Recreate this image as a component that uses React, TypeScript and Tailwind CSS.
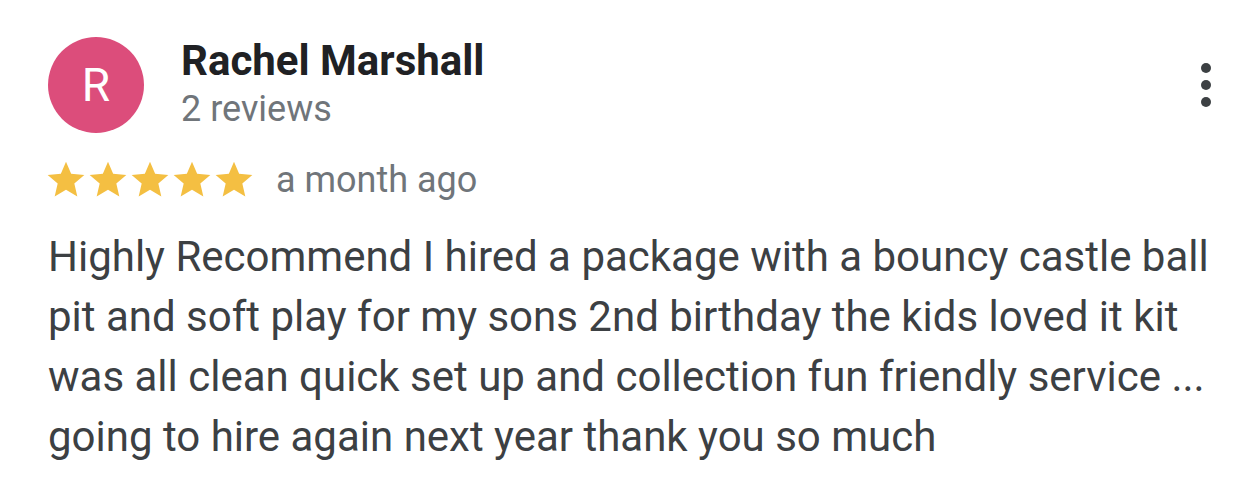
export default function App() {
  return (
    <div className="w-[1252px] h-[502px] bg-white font-['Roboto',sans-serif] overflow-hidden">
      <div className="pl-[48px] pr-[30px] pt-[37px]">
        {/* header */}
        <div className="flex items-start">
          <div className="w-[96px] h-[96px] rounded-full bg-[#dc4d7b] flex items-center justify-center shrink-0">
            <span className="text-white text-[46px] leading-none">R</span>
          </div>
          <div className="ml-[37px] flex-1">
            <div className="text-[42px] font-bold text-[#202124] leading-[48px]">Rachel Marshall</div>
            <div className="text-[36px] text-[#70757a] leading-[42px] mt-[3px]">2 reviews</div>
          </div>
          <div className="flex flex-col items-center gap-[7px] mt-[26px] mr-[11px]">
            <span className="w-[10px] h-[10px] rounded-full bg-[#3c4043]" />
            <span className="w-[10px] h-[10px] rounded-full bg-[#3c4043]" />
            <span className="w-[10px] h-[10px] rounded-full bg-[#3c4043]" />
          </div>
        </div>

        {/* rating */}
        <div className="flex items-center mt-[25px]">
          <div className="flex -ml-[3px]">
            {[0, 1, 2, 3, 4].map((i) => (
              <svg key={i} viewBox="0 0 24 24" className="w-[44px] h-[44px] -mx-[1px]" fill="#f4bf42">
                <path d="M12 17.27L18.18 21l-1.64-7.03L22 9.24l-7.19-.61L12 2 9.19 8.63 2 9.24l5.46 4.73L5.82 21z" />
              </svg>
            ))}
          </div>
          <span className="ml-[21px] text-[36px] text-[#70757a] leading-none">a month ago</span>
        </div>

        {/* body */}
        <p className="mt-[25px] text-[42px] leading-[60px] text-[#3c4043]">
          Highly Recommend I hired a package with a bouncy castle ball pit and soft play for my sons 2nd birthday the kids loved it kit was all clean quick set up and collection fun friendly service ... going to hire again next year thank you so much
        </p>
      </div>
    </div>
  );
}
